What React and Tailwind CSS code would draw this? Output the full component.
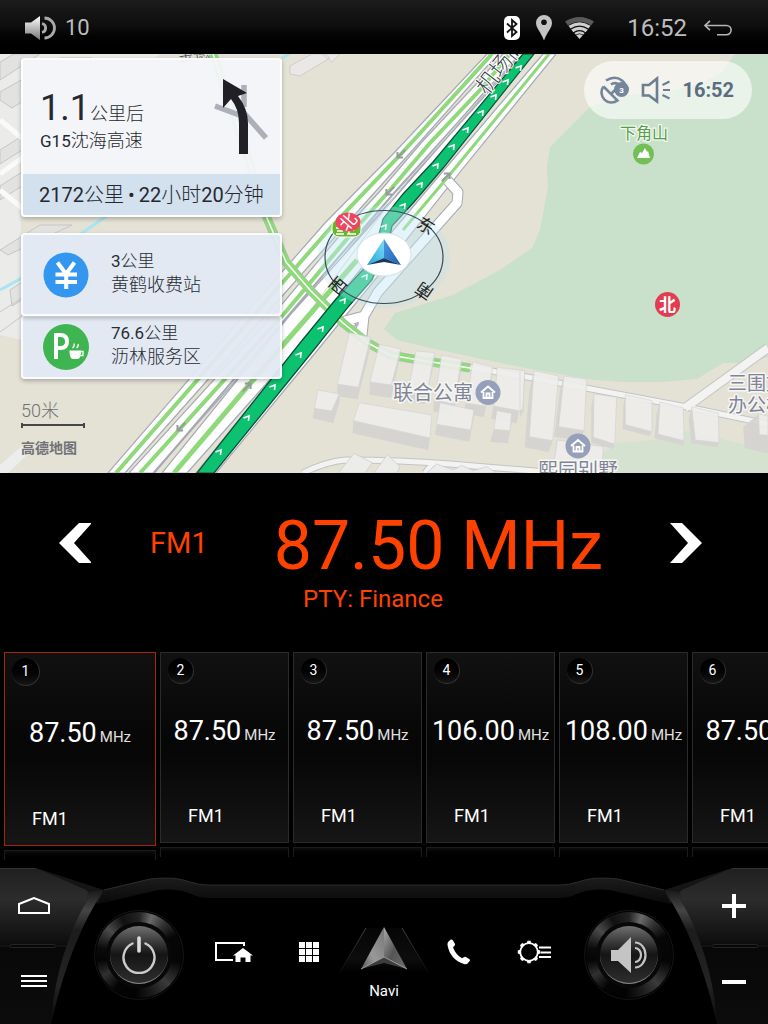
import React from "react";

const FONT = "font-['Roboto','Noto_Sans_CJK_SC',sans-serif]";

/* ---------- status bar ---------- */

function StatusBar() {
  return (
    <header className="flex h-[54px] items-center bg-linear-to-b from-[#1c1c1c] via-[#0d0d0d] to-black px-6 pt-0.5 text-[#bdbdbd]">
      <svg className="h-6 w-8" viewBox="0 0 32 24" aria-hidden="true">
        <defs>
          <linearGradient id="spk" x1="0" y1="0" x2="0" y2="1">
            <stop offset="0" stopColor="#fff" />
            <stop offset="1" stopColor="#777" />
          </linearGradient>
        </defs>
        <path d="M1 6.500h6L16 0v24l-9-6.500H1z" fill="url(#spk)" />
        <path d="M18 7.500a4.600 4.600 0 0 1 0 9M20.500 2a10 10 0 0 1 0 20" fill="none" stroke="#aaa" strokeWidth="2.800" />
      </svg>
      <span className="ml-[9px] text-[22px] leading-6">10</span>
      <div className="ml-auto flex items-center">
        <svg className="h-6 w-4" viewBox="0 0 16 24" aria-label="Bluetooth">
          <rect width="16" height="24" rx="5" fill="#fff" />
          <path d="M3 7.500l9.500 8.500L8 20V4l4.500 4L3 16.500" fill="none" stroke="#111" strokeWidth="1.800" />
        </svg>
        <svg className="ml-4 h-[26px] w-4" viewBox="0 0 16 26" aria-label="Location">
          <path fillRule="evenodd" d="M8 0a8 8 0 0 1 8 8c0 5-5 9-8 17.500C5 17 0 13 0 8a8 8 0 0 1 8-8zm0 4.500a2.800 2.800 0 1 0 0 5.600 2.800 2.800 0 0 0 0-5.600z" fill="#c4c4c4" />
        </svg>
        <svg className="ml-[13px] h-[22px] w-[29px]" viewBox="0 0 29 22" aria-label="Wi-Fi">
          <path d="M0 4.500Q14.500-4.500 29 4.500L26 8.500Q14.500 1 3 8.500z" fill="#5a5a5a" />
          <path d="M3.500 8.800Q14.500 1.500 25.500 8.800L23.500 11.500Q14.500 5.500 5.500 11.500z" fill="#d0d0d0" />
          <path d="M6.200 12.500Q14.500 7 22.800 12.500L20.700 15.200Q14.500 11 8.300 15.200z" fill="#d0d0d0" />
          <path d="M9.300 16Q14.500 12.500 19.700 16L14.500 22z" fill="#d0d0d0" />
          <path d="M10.500 18Q14.500 15.500 18.500 18" fill="none" stroke="#111" strokeWidth="0.800" />
        </svg>
        <time className="ml-[33px] text-[24px] leading-7">16:52</time>
        <button type="button" aria-label="Back" className="ml-[17px] mr-3">
          <svg className="h-4 w-7" viewBox="0 0 28 16">
            <path d="M6 .8L1 5.500l5 4.700M1 5.500h21.500a4.500 4.500 0 0 1 0 9.200H13" fill="none" stroke="#b5b5b5" strokeWidth="1.600" />
          </svg>
        </button>
      </div>
    </header>
  );
}

/* ---------- map ---------- */

const lowerBlocks = [
  { side: "172,252 235,262 272,112 270,150 233,298 171,288", top: "208,98 272,112 235,262 172,252" },
  { side: "270,246 334,255 362,147 360,170 333,294 268,284", top: "298,133 362,147 334,255 270,246" },
  { side: "380,275 440,285 464,158 462,190 434,312 380,306", top: "408,153 464,158 440,285 384,275" },
  { side: "462,300 522,312 545,178 543,215 520,345 460,335", top: "485,165 545,178 522,312 464,300" },
  { side: "556,310 618,318 638,200 636,225 612,352 554,340", top: "578,186 638,200 618,318 560,310" },
  { side: "640,318 724,334 734,212 734,240 710,370 634,356", top: "652,202 734,212 724,334 642,318" },
  { side: "103,325 155,333 178,282 180,300 160,370 98,355", top: "114,270 178,282 155,333 103,325" },
  { side: "220,362 450,414 455,345 453,380 445,450 218,400", top: "238,308 455,345 450,414 220,362" },
  { side: "470,373 572,390 582,330 580,360 568,425 465,405", top: "480,308 582,330 572,390 470,373" },
  { side: "642,388 690,392 695,340 696,360 684,430 630,426", top: "650,332 695,340 690,392 642,388" },
];

const rightBlocks = [
  { side: "42,272 28,470 98,482 86,516 14,502 28,330", top: "42,272 116,288 98,482 28,470" },
  { side: "132,288 116,440 192,452 184,482 103,470 120,330", top: "132,288 200,298 192,452 116,440" },
  { side: "222,342 220,472 284,492 280,507 214,488 214,380", top: "222,342 290,352 284,492 220,472" },
  { side: "316,344 316,434 396,455 388,468 308,447 310,380", top: "316,344 396,362 396,455 316,434" },
  { side: "420,366 414,462 492,482 490,496 404,475 410,400", top: "420,366 490,384 492,482 414,462" },
  { side: "515,380 526,480 597,488 592,502 514,490 506,420", top: "515,380 595,400 597,488 526,480" },
  { side: "670,440 714,404 744,410 744,520 674,504", top: "716,402 744,408 744,466 718,464" },
  { side: "0,270 14,272 10,395 0,410", top: "0,270 14,272 8,390 0,390" },
  { side: "110,480 250,500 240,579 98,579", top: "112,480 250,500 244,579 98,579" },
];

function Blocks({ items }) {
  return items.map((b) => (
    <g key={b.top} stroke="#d2d2d5" strokeWidth="2" opacity="0.9">
      <polygon points={b.side} fill="#d5d3d1" stroke="none" />
      <polygon points={b.top} fill="#eeeeec" />
    </g>
  ));
}

const chevrons = [
  [219, 452], [247, 418], [273, 387], [299, 355], [321, 329], [343, 301], [365, 277],
  [384, 227], [403, 206], [420, 185], [436, 166], [452, 147], [466, 130], [481, 113], [494, 97], [506, 82], [519, 68],
];

const grayArrows = [
  { x: 401, y: 154, r: 225 }, { x: 390, y: 191, r: 225 }, { x: 446, y: 177, r: 45 },
  { x: 181, y: 427, r: 225 }, { x: 247, y: 387, r: 45 },
];

function HomePin({ x, y }) {
  return (
    <g transform={`translate(${x} ${y})`}>
      <circle r="12.500" fill="#96a0ba" />
      <path d="M-7 0L0-6L7 0M-4.500-.5V5.500H4.500V-.5M-1.500 5V1H1.500V5" fill="none" stroke="#fff" strokeWidth="1.800" />
    </g>
  );
}

function MapDrawing() {
  return (
    <svg className="absolute inset-0 h-full w-full" viewBox="0 54 768 419" preserveAspectRatio="xMidYMid slice" role="img" aria-label="Map" fontFamily="Roboto, 'Noto Sans CJK SC', sans-serif">
      <defs>
        <linearGradient id="carR" x1="0" y1="0" x2="1" y2="1"><stop offset="0" stopColor="#4b9be8" /><stop offset="1" stopColor="#1c5cae" /></linearGradient>
        <linearGradient id="carL" x1="1" y1="0" x2="0" y2="1"><stop offset="0" stopColor="#7fdcf5" /><stop offset="1" stopColor="#1fa3dd" /></linearGradient>
      </defs>
      <rect x="0" y="54" width="768" height="419" fill="#e4e1d5" />
      <path d="M735 54L722 72 700 84 665 92 620 96 590 107 550 147 547 167 548 187 540 230 532 248 500 270 453 295 395 313 384 329 397 340 440 350 520 367 587 379 623 382 663 382 697 379 723 363 748 363 768 357V54z" fill="#c9e0ca" />
      <path d="M600 473L603 453 617 443 653 440 687 431 747 445 768 450V473z" fill="#d5e2d0" />

      {/* district on the far left */}
      <path d="M0 54H160L60 130 20 160 22 340 0 335z" fill="#ebebea" />
      <g fill="#e2e2e1" stroke="#c6c6ca" strokeWidth="1">
        <path d="M0 62L14 54H40L0 80zM0 92L60 58H92L12 108 0 100zM0 150L22 136V150L0 164zM0 186L22 172V186L0 200z" />
        <path d="M0 250L40 225H72L8 255zM10 290L22 282V300L12 306z" />
      </g>
      <path d="M0 120L22 138M0 190L22 208M0 174L22 158" stroke="#fafafa" strokeWidth="5" />
      <path d="M0 312L22 298M0 332L22 316" stroke="#c6c6ca" />
      <path d="M72 240L118 208M0 290L22 278M282 58L292 52" stroke="#a9e4f3" strokeWidth="3" />
      <path d="M290 66L312 54H325L330 58 300 76 290 74zM322 54H340L332 62z" fill="#e9e8e6" stroke="#d0cecb" />
      <path d="M0 465L22 446 30 452 8 473H0z" fill="#eceeee" />

      {/* lower streets */}
      <g fill="none" strokeLinejoin="round">
        <g stroke="#c4c4c6" strokeWidth="7">
          <path d="M468 367L527 377 687 407 768 424M303 473Q325 462 345 460Q400 460 450 464L560 473M425 473L433 463" />
          <path d="M685 408L768 348" strokeWidth="10" />
        </g>
        <g stroke="#f3f3f2" strokeWidth="5">
          <path d="M468 367L527 377 687 407 768 424M303 473Q325 462 345 460Q400 460 450 464L560 473M425 473L433 463" />
          <path d="M685 408L768 348" strokeWidth="8" />
        </g>
      </g>

      {/* expressway carriageways */}
      <g fill="#fff" stroke="#a4a9b3" strokeWidth="1.200">
        <path d="M487 54L394 153 325 223 274 281 108 473H125L292 285 341 230 410 153 498 54z" />
        <path d="M503 54L478 82 421 143 381 190 347 227 272 316 129 473H153L297 312 367 227 401 190 440 143 486 90 520 54z" />
        <path d="M520 57L445 140 404 187 369 227 290 315 162 473H187L305 340 372 260 400 208 445 150 528 54z" />
        <path d="M543 54L433 183 396 227 360 270 196 473H216L316 352 383 270 411 234 460 172 556 54z" />
      </g>
      <g stroke="#a4a9b3" strokeWidth="2" fill="none">
        <path d="M515 60L436 147 395 192 300 302 154 473" />
        <path d="M274 282L192 375 127 473" strokeWidth="0" />
        <path d="M514 60L400 189 305 318" stroke="#d9d7d2" strokeWidth="1" />
      </g>

      {/* slip road */}
      <g fill="none" strokeLinejoin="round">
        <path d="M447 180L458 192 457 203 378 292 364 316 361 345M364 316L345 321 354 330 362 330" stroke="#a4a9b3" strokeWidth="11" />
        <path d="M447 180L458 192 457 203 378 292 364 316 361 345M364 316L345 321 354 330 362 330" stroke="#fff" strokeWidth="9" />
        <path d="M351 327L357 325 356 332z" fill="#d5d3ce" stroke="#a4a9b3" />
      </g>

      <g stroke="#8ed97a" strokeWidth="4" fill="none">
        <path d="M492 54L402 153 333 225 283 282 116 473" />
        <path d="M510 54L480 90 430 143 390 190 357 227 283 315 140 473" />
        <path d="M357 260L283 345 174 473" strokeWidth="5" />
        <path d="M549 54L447 178 403 230" strokeWidth="3" />
      </g>

      {/* crossing street */}
      <g fill="none">
        <path d="M213 54L235 118 267 218 286 262 310 290 343 323 368 343 390 355 413 359 470 368" stroke="#b5bab8" strokeWidth="9" />
        <path d="M213 54L235 118 267 218 286 262 310 290 343 323 368 343 390 355 413 359 470 368" stroke="#8ed97a" strokeWidth="8" />
        <path d="M213 54L235 118 267 218 286 262 310 290 343 323 368 343 390 355 413 359 470 368" stroke="#fff" strokeWidth="1.500" />
      </g>

      {/* active route */}
      <path d="M523 54L433 162 403 194 383 219 379 234 370 262 336 299 300 343 197 473H214L313 351 349 306 372 280 389 240 392 226 414 202 444 167 534 54z" fill="#0cc170" stroke="#0b4c36" strokeWidth="1.200" />
      <g fill="none" stroke="#fff" strokeWidth="1.600">
        {chevrons.map(([x, y]) => (
          <path key={x} d="M-3.500 0L2-2 1.500 3" transform={`translate(${x} ${y})`} />
        ))}
      </g>
      <g fill="none" stroke="#979ba0" strokeWidth="2">
        {grayArrows.map((a) => (
          <path key={`${a.x}-${a.y}`} d="M0 6V-5M-4-1L0-5L4-1" transform={`translate(${a.x} ${a.y}) rotate(${a.r})`} />
        ))}
      </g>

      <g transform="translate(280 300) scale(.3333)">
        <Blocks items={lowerBlocks} />
        <g fill="#ececeb" stroke="#c9c9ce" strokeWidth="2">
          <path d="M175 519L222 460 277 488 255 519zM282 519L322 464 360 500 350 519zM440 519L470 492 520 510 545 496 580 512 620 500 650 519z" />
        </g>
      </g>
      <g transform="translate(520 280) scale(.3333)">
        <Blocks items={rightBlocks} />
      </g>

      {/* labels */}
      <g fill="#3a3f4a" stroke="#fff" strokeWidth="2" paintOrder="stroke">
        <text fontSize="22" fontWeight="300" transform="translate(487 96) rotate(-52)">机场高速</text>
        <text x="178" y="60" fontSize="16" fontWeight="300" stroke="none" transform="rotate(-8 190 58)">金德</text>
      </g>
      <g fill="#7f8595" stroke="#f6f6f4" strokeWidth="3" paintOrder="stroke" strokeLinejoin="round">
        <text x="393" y="400" fontSize="20">联合公寓</text>
        <text x="538" y="478" fontSize="20">熙园别墅</text>
        <text x="728" y="390" fontSize="19">三围文</text>
        <text x="728" y="412" fontSize="19">办公楼</text>
      </g>
      <HomePin x="488" y="392.500" />
      <HomePin x="578" y="446" />
      <text x="620" y="139" fontSize="16" fill="#55a04a" stroke="#f2f8ef" strokeWidth="2.500" paintOrder="stroke">下角山</text>
      <circle cx="643.500" cy="154" r="10.500" fill="#72bf55" />
      <path d="M637 158L640 152 642 153 645 148 647 152 648 151 650 158z" fill="#fff" />
      <circle cx="667.500" cy="304.500" r="12.500" fill="#e23c50" />
      <text x="667.500" y="311" fontSize="17" fontWeight="700" fill="#fff" textAnchor="middle">北</text>

      {/* compass and vehicle */}
      <ellipse cx="384" cy="257" rx="66" ry="51" fill="#b9e6f5" fillOpacity=".3" />
      <ellipse cx="384" cy="257" rx="59" ry="46.500" fill="#cfeaf3" fillOpacity=".2" stroke="#3d4a52" strokeWidth="1.200" />
      <rect x="332" y="219" width="29" height="18" rx="7" fill="#6cb52d" stroke="#fff" />
      <path d="M336 228H344M337 231H343M336 234H344M349 226V234M349 230H354M347 234H356" stroke="#fff" strokeWidth="1.500" />
      <ellipse cx="348" cy="222" rx="12.500" ry="9.500" fill="#ee4660" />
      <g fontSize="17" fill="#222" textAnchor="middle">
        <text transform="translate(348 222) rotate(-48)" y="6" fill="#fff">北</text>
        <text transform="translate(426 226) rotate(32)" y="6">东</text>
        <text transform="translate(424 291) rotate(-145)" y="6">南</text>
        <text transform="translate(338 286) rotate(-50)" y="6">西</text>
      </g>
      <ellipse cx="384" cy="254.500" rx="27" ry="21.500" fill="#fff" stroke="#d5e2ea" />
      <path d="M384 239L384 258 367 265z" fill="url(#carL)" />
      <path d="M384 239L401 265 384 258z" fill="url(#carR)" />
      <path d="M367 265L384 258 401 265 384 262z" fill="#173a60" />
    </svg>
  );
}

function TurnArrow() {
  return (
    <svg className="h-[76px] w-[54px]" viewBox="0 0 54 76" aria-label="Bear left">
      <path d="M30 6V28M1 27L28 37M30 34L52 59" fill="none" stroke="#adb0b8" strokeWidth="5.500" />
      <path d="M9 0L33 14 24 17Q34 30 34 44V75H25V44Q25 30 17 20L9 29z" fill="#202026" />
    </svg>
  );
}

const panel = "rounded border-2 border-white/80 shadow-[0_2px_4px_rgba(0,0,0,0.25)]";

function GuidanceCard() {
  return (
    <section className={`${panel} overflow-hidden bg-[#f4f6fa]/95 text-[#26282e]`}>
      <div className="flex h-[114px] items-center pl-[17px] pr-3">
        <div className="pt-2">
          <p className="leading-8">
            <span className="text-[36px]">1.1</span>
            <span className="text-[18px] font-light">公里后</span>
          </p>
          <p className="text-[18px] font-light leading-5">
            <span className="text-[17px] font-normal">G15</span>沈海高速
          </p>
        </div>
        <div className="ml-auto">
          <TurnArrow />
        </div>
      </div>
      <p className="flex h-[41px] items-center whitespace-nowrap bg-[#d3e0ee] pl-4 text-[20px] font-light">
        <span className="font-normal">2172</span>公里<span className="mx-1 font-normal">•</span>
        <span className="font-normal">22</span>小时<span className="font-normal">20</span>分钟
      </p>
    </section>
  );
}

function YenIcon() {
  return (
    <svg className="size-[46px]" viewBox="0 0 46 46" aria-hidden="true">
      <circle cx="23" cy="23" r="22.500" fill="#3397f0" />
      <path d="M14.500 10.500L23 22L31.500 10.500M12.500 22.500H34M12.500 30H34M23.200 22V37" fill="none" stroke="#fff" strokeWidth="4" />
    </svg>
  );
}

function ServiceIcon() {
  return (
    <svg className="size-[46px]" viewBox="0 0 46 46" aria-hidden="true">
      <circle cx="23" cy="23" r="23" fill="#3fb551" />
      <path d="M13 35V11H17.500Q24 11 24 17.500T17.500 24H13" fill="none" stroke="#fff" strokeWidth="4" />
      <path d="M26.500 26.500H38Q38 35 34.500 35H30Q26.500 35 26.500 26.500z" fill="#fff" />
      <path d="M37 27.500H40V31.500H37M29.500 24Q32 22 31 19.500M33.500 24Q36 22 35 20" fill="none" stroke="#fff" strokeWidth="1.300" />
    </svg>
  );
}

function PoiCard({ icon, value, name, className }) {
  return (
    <section className={`${panel} ${className} flex items-center gap-[22px] bg-[#e1e9f3]/95 pl-5`}>
      {icon}
      <div className="pb-1 text-[18px] font-light leading-6 text-[#2a2c33]">
        <p className="text-[17px]"><span className="font-normal">{value}</span>公里</p>
        <p>{name}</p>
      </div>
    </section>
  );
}

function MapStatus() {
  return (
    <div className="absolute right-4 top-[7px] flex h-[58px] items-center gap-3 rounded-full bg-white/60 pl-4 pr-[18px] text-[#5b6b80]">
      <svg className="h-7 w-[29px]" viewBox="0 0 29 28" aria-label="Satellites">
        <g fill="none" stroke="#76869a" strokeWidth="2.600">
          <path d="M3.500 10.500A10 10 0 0 0 17.500 24.500L3.500 10.500M11 18L15 14" />
          <path d="M6 4.500Q15-1 22 4.500Q25 7 26 10M11 8.500Q14 6 18 8" />
        </g>
        <circle cx="21.500" cy="13.500" r="7.500" fill="#76869a" />
        <text x="21.500" y="16.500" fontSize="8" fontWeight="700" fill="#fff" textAnchor="middle">3</text>
      </svg>
      <svg className="h-7 w-[29px]" viewBox="0 0 29 28" aria-label="Sound">
        <path d="M2 9H8L16 2.500V25.500L8 19.500H2z" fill="none" stroke="#6d7d92" strokeWidth="2.600" />
        <path d="M21.500 9L28.500 5.500M22 14H29M21.500 19L28.500 22.500" stroke="#6d7d92" strokeWidth="2.200" />
      </svg>
      <time className="text-[20px] font-bold">16:52</time>
    </div>
  );
}

function MapPanel() {
  return (
    <section className="relative h-[419px] overflow-hidden">
      <MapDrawing />
      <div className="absolute left-[21px] top-1 flex w-[261px] flex-col">
        <GuidanceCard />
        <PoiCard icon={<YenIcon />} value="3" name="黄鹤收费站" className="relative z-10 mt-4 h-[83px]" />
        <PoiCard icon={<ServiceIcon />} value="76.6" name="沥林服务区" className="-mt-px h-16" />
        <div className="mt-5 w-[64px] text-[#707275]">
          <p className="text-[18px] font-light leading-6">50米</p>
          <div className="h-[5px] border-x-2 border-[#44474a]">
            <div className="h-[3px] border-b-2 border-[#44474a]" />
          </div>
          <p className="mt-2 whitespace-nowrap text-[14px] font-bold leading-6">高德地图</p>
        </div>
      </div>
      <MapStatus />
    </section>
  );
}

/* ---------- radio ---------- */

function Seek({ label, points }) {
  return (
    <button type="button" aria-label={label}>
      <svg className="h-10 w-8" viewBox="0 0 32 40">
        <polygon points={points} fill="#fff" />
      </svg>
    </button>
  );
}

function Tuner() {
  return (
    <section className="flex h-[178px] flex-col items-center pt-[30px] text-[#ff4200]">
      <div className="flex h-20 w-full items-center justify-between pl-[59px] pr-[66px]">
        <Seek label="Previous station" points="20,0 33,0 15,20 33,40 20,40 0,20" />
        <div className="mr-2 flex items-center gap-[66px]">
          <span className="text-[29px] leading-10">FM1</span>
          <h1 className="whitespace-nowrap pt-1.5 text-[68px] leading-20">87.50 MHz</h1>
        </div>
        <Seek label="Next station" points="0,0 12,0 32,20 12,40 0,40 18,20" />
      </div>
      <p className="mr-[22px] text-[24px] leading-8">PTY: Finance</p>
    </section>
  );
}

const presets = [
  { id: 1, freq: "87.50", active: true },
  { id: 2, freq: "87.50" },
  { id: 3, freq: "87.50" },
  { id: 4, freq: "106.00" },
  { id: 5, freq: "108.00" },
  { id: 6, freq: "87.50" },
];

function Preset({ id, freq, active }) {
  const size = active ? "h-[194px] w-[152px] border-[#a52408]" : "h-[191px] w-[129px] border-[#2a2b2c]";
  const badge = active ? "size-7" : "size-[26px]";
  return (
    <div className="shrink-0">
      <button type="button" aria-pressed={!!active} className={`${size} flex flex-col items-start border bg-linear-to-b from-[#111] via-[#060606] to-[#161616] text-white`}>
        <span className={`${badge} ml-[7px] mt-[5px] flex items-center justify-center rounded-full border-b border-r border-[#333] bg-linear-to-b from-black to-[#161616] text-[14px]`}>
          {id}
        </span>
        <span className="mt-[29px] flex w-full items-baseline justify-center gap-[3px] whitespace-nowrap text-[27px] leading-9">
          {freq}
          <span className="text-[15px] text-[#e0e0e0]">MHz</span>
        </span>
        <span className="mb-[14px] ml-[27px] mt-auto text-[18px] leading-6">FM1</span>
      </button>
      <div className="mt-1 h-2.5 border border-b-0 border-[#1c1c1c] bg-linear-to-b from-[#0e0e0e] to-black" />
    </div>
  );
}

function Presets() {
  return (
    <section className="flex h-[217px] gap-1 overflow-hidden pl-1 pt-px">
      {presets.map((p) => (
        <Preset key={p.id} {...p} />
      ))}
    </section>
  );
}

/* ---------- dock ---------- */

function DockShape() {
  return (
    <svg className="absolute inset-0 h-full w-full" viewBox="0 0 768 156" preserveAspectRatio="none" aria-hidden="true">
      <defs>
        <linearGradient id="wing" x1="0" y1="0" x2="0" y2="1">
          <stop offset="0" stopColor="#202020" /><stop offset=".2" stopColor="#2c2c2c" /><stop offset=".49" stopColor="#0d0d0d" /><stop offset=".5" stopColor="#080808" /><stop offset="1" stopColor="#0c0c0c" />
        </linearGradient>
        <linearGradient id="edge" x1="0" y1="0" x2="0" y2="1">
          <stop offset="0" stopColor="#1a1a1a" /><stop offset=".15" stopColor="#454545" /><stop offset=".3" stopColor="#1c1c1c" /><stop offset=".7" stopColor="#242424" /><stop offset="1" stopColor="#0a0a0a" />
        </linearGradient>
        <linearGradient id="rim" x1="0" y1="0" x2="0" y2="1">
          <stop offset="0" stopColor="#1c1c1c" /><stop offset="1" stopColor="#090909" />
        </linearGradient>
        <g id="side">
          <path d="M36 0L104 22 98 36 88 27z" fill="#151515" />
          <path d="M0 0H36L86 22Q90 24 87 32 58 88 51 156H0z" fill="url(#wing)" />
          <path d="M88 24L104 22Q70 72 51 156 55 90 87 32z" fill="url(#edge)" />
          <path d="M0 78H66" stroke="#1c1c1c" />
          <rect x="10" y="76.500" width="46" height="3" rx="1.500" fill="#080808" stroke="#242424" />
          <path d="M0 .5H36" stroke="#303030" />
        </g>
      </defs>
      <path d="M104 22L150 11Q175 8 190 14 200 17 208 17H560Q568 17 578 14 593 8 618 11L664 22 670 36 610 22Q590 20 577 26 568 30 560 30H208Q200 30 191 26 178 20 158 22L98 36z" fill="url(#rim)" />
      <path d="M104 22L150 11Q175 8 190 14 200 17 208 17H560Q568 17 578 14 593 8 618 11L664 22" fill="none" stroke="#2c2c2c" />
      <use href="#side" />
      <use href="#side" transform="matrix(-1 0 0 1 768 0)" />
    </svg>
  );
}

function Knob({ label, children }) {
  return (
    <button type="button" aria-label={label} className="mt-[22px] flex size-[90px] items-center justify-center rounded-full border border-[#161616]">
      <span className="flex size-[86px] items-center justify-center rounded-full bg-[conic-gradient(#222_0deg,#6a6a6a_18deg,#333_38deg,#060606_62deg,#050505_100deg,#3a3a3a_135deg,#1c1c1c_160deg,#030303_185deg,#040404_215deg,#303030_240deg,#050505_262deg,#0a0a0a_280deg,#4a4a4a_310deg,#111_335deg,#222_360deg)]">
        <span className="flex size-[66px] items-center justify-center rounded-full bg-[#080808]">
          <span className="flex size-[58px] items-center justify-center rounded-full border-b border-[#888] bg-linear-to-b from-[#707070] via-[#151515] to-[#2e2e2e]">
            {children}
          </span>
        </span>
      </span>
    </button>
  );
}

function PowerIcon() {
  return (
    <svg className="h-[38px] w-[34px]" viewBox="0 0 34 38" aria-hidden="true">
      <path d="M10.500 7.500A15.500 15.500 0 1 0 23.500 7.500" fill="none" stroke="#ccc" strokeWidth="2.400" strokeLinecap="round" />
      <path d="M17 2V15" stroke="#ddd" strokeWidth="3.600" strokeLinecap="round" />
    </svg>
  );
}

function VolumeIcon() {
  return (
    <svg className="h-9 w-9" viewBox="0 0 36 36" aria-hidden="true">
      <path d="M0 13H7L20 0V36L7 24H0z" fill="#c4c4c4" />
      <path d="M24 11A6 7 0 0 1 24 25M24 5.500A10.500 12.500 0 0 1 24 30.500" fill="none" stroke="#c4c4c4" strokeWidth="2.200" />
    </svg>
  );
}

function ScreenIcon() {
  return (
    <svg className="h-5 w-[38px]" viewBox="0 0 38 20" aria-hidden="true">
      <path d="M29 4V1H1V18H18" fill="none" stroke="#fff" strokeWidth="2" />
      <path d="M28 6L38 13.500H35.500V20H30.500V15.500H25.500V20H20.500V13.500H18z" fill="#fff" />
    </svg>
  );
}

function GridIcon() {
  return (
    <svg className="size-5" viewBox="0 0 20 20" fill="#fff" aria-hidden="true">
      {[0, 7, 14].map((y) => [0, 7, 14].map((x) => <rect key={`${x}-${y}`} x={x} y={y} width="6" height="6" />))}
    </svg>
  );
}

function NaviIcon() {
  return (
    <svg className="-mx-2 -mt-0.5 h-12 w-[90px]" viewBox="0 0 90 48" aria-hidden="true">
      <defs>
        <linearGradient id="nl" x1="1" y1="0" x2="0" y2="1"><stop offset="0" stopColor="#777" /><stop offset=".6" stopColor="#999" /><stop offset="1" stopColor="#555" /></linearGradient>
        <linearGradient id="nr" x1="0" y1="0" x2="1" y2="1"><stop offset="0" stopColor="#aaa" /><stop offset=".5" stopColor="#555" /><stop offset="1" stopColor="#707070" /></linearGradient>
        <linearGradient id="lane" x1="0" y1="0" x2="0" y2="1"><stop offset="0" stopColor="#060606" /><stop offset=".7" stopColor="#0d0d0d" /><stop offset="1" stopColor="#000" /></linearGradient>
        <linearGradient id="laneEdge" gradientUnits="userSpaceOnUse" x1="0" y1="0" x2="0" y2="46"><stop offset="0" stopColor="#444" /><stop offset="1" stopColor="#0a0a0a" /></linearGradient>
      </defs>
      <path d="M27 2H63L90 46H0z" fill="url(#lane)" />
      <path d="M27 2L1 46M63 2L89 46" stroke="url(#laneEdge)" />
      <path d="M45 1V31L22 43z" fill="url(#nl)" />
      <path d="M45 1L68 43 45 31z" fill="url(#nr)" />
      <path d="M22 43L45 31 68 43 45 37z" fill="#3c3c3c" />
      <path d="M22 43L45 31 68 43" fill="none" stroke="#b5b5b5" strokeWidth=".8" />
    </svg>
  );
}

function PhoneIcon() {
  return (
    <svg className="h-[26px] w-6" viewBox="0 0 24 26" aria-hidden="true">
      <path d="M1.500 2.500L4 .5Q5.300 .2 6 1.500L8 5Q8.200 6 7.500 6.700L6 8.300Q8.500 15.500 15 19.300L17.300 18Q18.200 17.500 19 18L22.500 20.300Q23.500 21 22.700 22L20.500 24.600Q19.500 25.500 17 25 3 20.500 .5 6 .2 3.500 1.500 2.500z" fill="#fff" />
    </svg>
  );
}

const teeth = [0, 45, 90, 135, 180, 225, 270, 315];

function SettingsIcon() {
  return (
    <svg className="h-6 w-[34px]" viewBox="0 0 34 24" aria-hidden="true">
      <circle cx="12" cy="12" r="8.800" fill="none" stroke="#fff" strokeWidth="1.800" />
      {teeth.map((a) => (
        <path key={a} d="M9.500 3.500L10.500 .8H13.500L14.500 3.500z" fill="#fff" transform={`rotate(${a} 12 12)`} />
      ))}
      <path d="M22 7.500H34M23.500 12.500H34M22 17H34" stroke="#fff" strokeWidth="2" />
    </svg>
  );
}

function DockButton({ label, children }) {
  return (
    <button type="button" aria-label={label} className="flex h-12 min-w-0 flex-1 items-center justify-center">
      {children}
    </button>
  );
}

function Dock() {
  return (
    <nav className="relative h-[156px]">
      <DockShape />
      <div className="relative flex h-full">
        <div className="flex w-[68px] flex-col">
          <button type="button" aria-label="Home" className="flex h-[75px] items-center justify-center">
            <svg className="h-[17px] w-8" viewBox="0 0 32 17"><path d="M1 16V7L16 1 31 7V16z" fill="none" stroke="#fff" strokeWidth="2" /></svg>
          </button>
          <button type="button" aria-label="Menu" className="flex h-[75px] items-center justify-center">
            <svg className="h-3 w-[26px]" viewBox="0 0 26 12"><path d="M0 1H26M0 6H26M0 11H26" stroke="#fff" strokeWidth="2" /></svg>
          </button>
        </div>
        <div className="flex flex-1 items-center justify-between px-[26px] pb-1">
          <Knob label="Power"><PowerIcon /></Knob>
          <div className="flex max-w-[375px] flex-1 items-start pt-10">
            <DockButton label="Screen"><ScreenIcon /></DockButton>
            <DockButton label="Apps"><GridIcon /></DockButton>
            <button type="button" className="flex min-w-0 flex-1 flex-col items-center text-white">
              <NaviIcon />
              <span className="mt-[7px] text-[15px] leading-5">Navi</span>
            </button>
            <DockButton label="Phone"><PhoneIcon /></DockButton>
            <DockButton label="Settings"><SettingsIcon /></DockButton>
          </div>
          <Knob label="Sound"><VolumeIcon /></Knob>
        </div>
        <div className="flex w-[68px] flex-col">
          <button type="button" aria-label="Volume up" className="flex h-[76px] items-center justify-center">
            <svg className="size-6" viewBox="0 0 24 24"><path d="M12 0V24M0 12H24" stroke="#fff" strokeWidth="4" /></svg>
          </button>
          <button type="button" aria-label="Volume down" className="flex h-[75px] items-center justify-center">
            <svg className="h-1 w-6" viewBox="0 0 24 4"><path d="M0 2H24" stroke="#fff" strokeWidth="4" /></svg>
          </button>
        </div>
      </div>
    </nav>
  );
}

export default function App() {
  return (
    <div className={`${FONT} flex min-h-screen flex-col overflow-hidden bg-black`}>
      <StatusBar />
      <main className="flex-1">
        <MapPanel />
        <Tuner />
        <Presets />
      </main>
      <Dock />
    </div>
  );
}
